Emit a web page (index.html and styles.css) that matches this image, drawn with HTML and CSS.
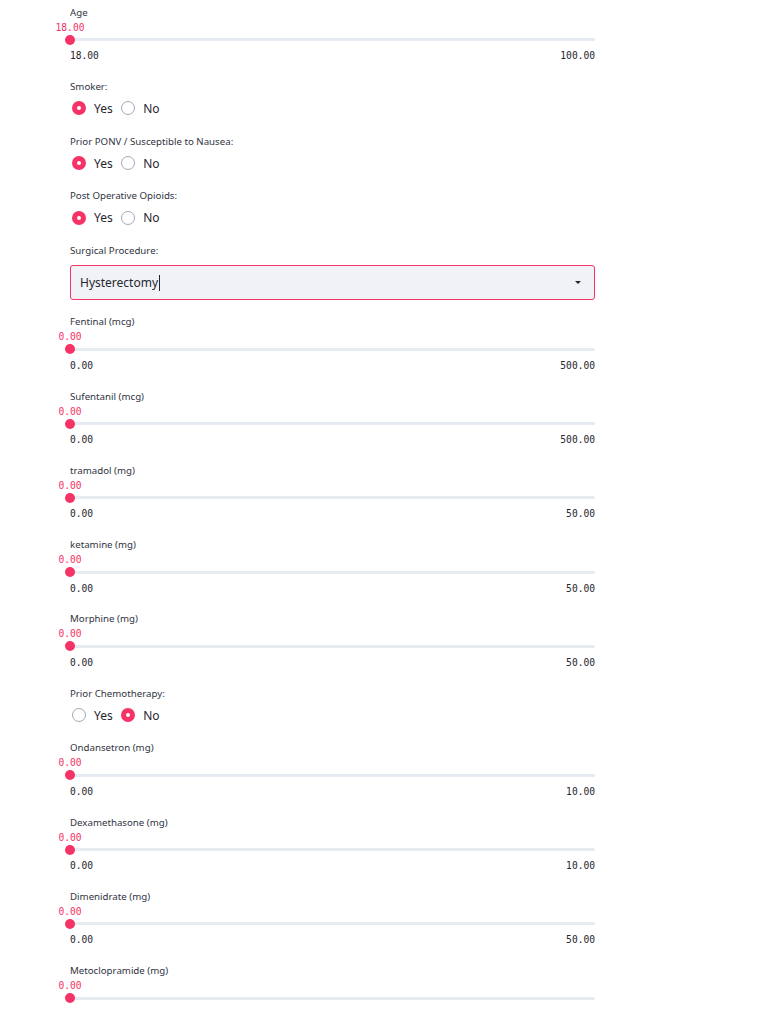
FILE: index.html
```html
<!DOCTYPE html>
<html>
<head>
<meta charset="utf-8">
<link rel="stylesheet" href="styles.css">
</head>
<body>
<main class="form">

  <div class="slider">
    <div class="label">Age</div>
    <div class="value-row"><span class="value">18.00</span></div>
    <div class="track-row"><span class="thumb"></span><span class="track"></span></div>
    <div class="minmax"><span>18.00</span><span>100.00</span></div>
  </div>

  <div class="radio-block">
    <div class="label">Smoker:</div>
    <div class="radios">
      <span class="opt"><span class="dot on"></span>Yes</span>
      <span class="opt"><span class="dot"></span>No</span>
    </div>
  </div>

  <div class="radio-block">
    <div class="label">Prior PONV / Susceptible to Nausea:</div>
    <div class="radios">
      <span class="opt"><span class="dot on"></span>Yes</span>
      <span class="opt"><span class="dot"></span>No</span>
    </div>
  </div>

  <div class="radio-block">
    <div class="label">Post Operative Opioids:</div>
    <div class="radios">
      <span class="opt"><span class="dot on"></span>Yes</span>
      <span class="opt"><span class="dot"></span>No</span>
    </div>
  </div>

  <div class="select-block">
    <div class="label">Surgical Procedure:</div>
    <div class="select">
      <span class="select-text">Hysterectomy<span class="caret"></span></span>
      <span class="arrow"></span>
    </div>
  </div>

  <div class="slider">
    <div class="label">Fentinal (mcg)</div>
    <div class="value-row"><span class="value">0.00</span></div>
    <div class="track-row"><span class="thumb"></span><span class="track"></span></div>
    <div class="minmax"><span>0.00</span><span>500.00</span></div>
  </div>

  <div class="slider">
    <div class="label">Sufentanil (mcg)</div>
    <div class="value-row"><span class="value">0.00</span></div>
    <div class="track-row"><span class="thumb"></span><span class="track"></span></div>
    <div class="minmax"><span>0.00</span><span>500.00</span></div>
  </div>

  <div class="slider">
    <div class="label">tramadol (mg)</div>
    <div class="value-row"><span class="value">0.00</span></div>
    <div class="track-row"><span class="thumb"></span><span class="track"></span></div>
    <div class="minmax"><span>0.00</span><span>50.00</span></div>
  </div>

  <div class="slider">
    <div class="label">ketamine (mg)</div>
    <div class="value-row"><span class="value">0.00</span></div>
    <div class="track-row"><span class="thumb"></span><span class="track"></span></div>
    <div class="minmax"><span>0.00</span><span>50.00</span></div>
  </div>

  <div class="slider">
    <div class="label">Morphine (mg)</div>
    <div class="value-row"><span class="value">0.00</span></div>
    <div class="track-row"><span class="thumb"></span><span class="track"></span></div>
    <div class="minmax"><span>0.00</span><span>50.00</span></div>
  </div>

  <div class="radio-block">
    <div class="label">Prior Chemotherapy:</div>
    <div class="radios">
      <span class="opt"><span class="dot"></span>Yes</span>
      <span class="opt"><span class="dot on"></span>No</span>
    </div>
  </div>

  <div class="slider">
    <div class="label">Ondansetron (mg)</div>
    <div class="value-row"><span class="value">0.00</span></div>
    <div class="track-row"><span class="thumb"></span><span class="track"></span></div>
    <div class="minmax"><span>0.00</span><span>10.00</span></div>
  </div>

  <div class="slider">
    <div class="label">Dexamethasone (mg)</div>
    <div class="value-row"><span class="value">0.00</span></div>
    <div class="track-row"><span class="thumb"></span><span class="track"></span></div>
    <div class="minmax"><span>0.00</span><span>10.00</span></div>
  </div>

  <div class="slider">
    <div class="label">Dimenidrate (mg)</div>
    <div class="value-row"><span class="value">0.00</span></div>
    <div class="track-row"><span class="thumb"></span><span class="track"></span></div>
    <div class="minmax"><span>0.00</span><span>50.00</span></div>
  </div>

  <div class="slider">
    <div class="label">Metoclopramide (mg)</div>
    <div class="value-row"><span class="value">0.00</span></div>
    <div class="track-row"><span class="thumb"></span><span class="track"></span></div>
    <div class="minmax"><span>0.00</span><span>50.00</span></div>
  </div>

</main>
</body>
</html>
```

FILE: styles.css
```css
html, body {
  margin: 0;
  padding: 0;
  background: #ffffff;
}

body {
  font-family: "Noto Sans", "Open Sans", sans-serif;
  color: #262730;
  overflow: hidden;
  height: 1010px;
}

.form {
  width: 525px;
  margin-left: 70px;
  padding-top: 4.5px;
  display: flex;
  flex-direction: column;
  gap: 14.25px;
}

.label {
  font-size: 9.7px;
  line-height: 15px;
  height: 15px;
  color: #31333f;
  white-space: nowrap;
}

/* slider */
.value-row {
  height: 11px;
  line-height: 11px;
  padding-bottom: 3px;
}

.value {
  display: inline-block;
  transform: translateX(-50%);
  font-family: "DejaVu Sans Mono", "Liberation Mono", monospace;
  font-size: 9.6px;
  color: #f63366;
}

.track-row {
  height: 12px;
  padding-bottom: 1px;
  display: flex;
  align-items: center;
}

.thumb {
  width: 10px;
  height: 10px;
  border-radius: 50%;
  background: #f63366;
  margin-left: -5px;
  margin-right: -5px;
  position: relative;
  z-index: 1;
  flex: none;
}

.track {
  flex: 1;
  height: 3px;
  background: #e6eaf1;
  border-radius: 2px;
}

.minmax {
  height: 15.5px;
  line-height: 13px;
  padding-top: 2.5px;
  display: flex;
  justify-content: space-between;
  font-family: "DejaVu Sans Mono", "Liberation Mono", monospace;
  font-size: 9.6px;
  color: #262730;
}

/* radios */
.radios {
  padding-top: 3.5px;
  padding-left: 1.5px;
  height: 22px;
  display: flex;
  align-items: center;
  gap: 8px;
}

.opt {
  display: flex;
  align-items: center;
  gap: 8.5px;
  font-size: 12px;
  color: #262730;
}

.dot {
  width: 14px;
  height: 14px;
  border-radius: 50%;
  box-sizing: border-box;
  border: 1.5px solid #a3a8b8;
  background: #ffffff;
  flex: none;
}

.dot.on {
  border: 5px solid #f63366;
  background: #ffffff;
}

/* select */
.select {
  margin-top: 7px;
  height: 35px;
  box-sizing: border-box;
  border: 1px solid #f63366;
  border-radius: 3px;
  background: #f0f2f6;
  display: flex;
  align-items: center;
  justify-content: space-between;
  padding: 0 13px 0 9px;
}

.select-text {
  font-size: 12px;
  color: #262730;
  display: flex;
  align-items: center;
}

.caret {
  display: inline-block;
  width: 1px;
  height: 16px;
  background: #262730;
  margin-left: 1px;
}

.arrow {
  width: 0;
  height: 0;
  border-left: 3px solid transparent;
  border-right: 3px solid transparent;
  border-top: 3px solid #262730;
}
```
